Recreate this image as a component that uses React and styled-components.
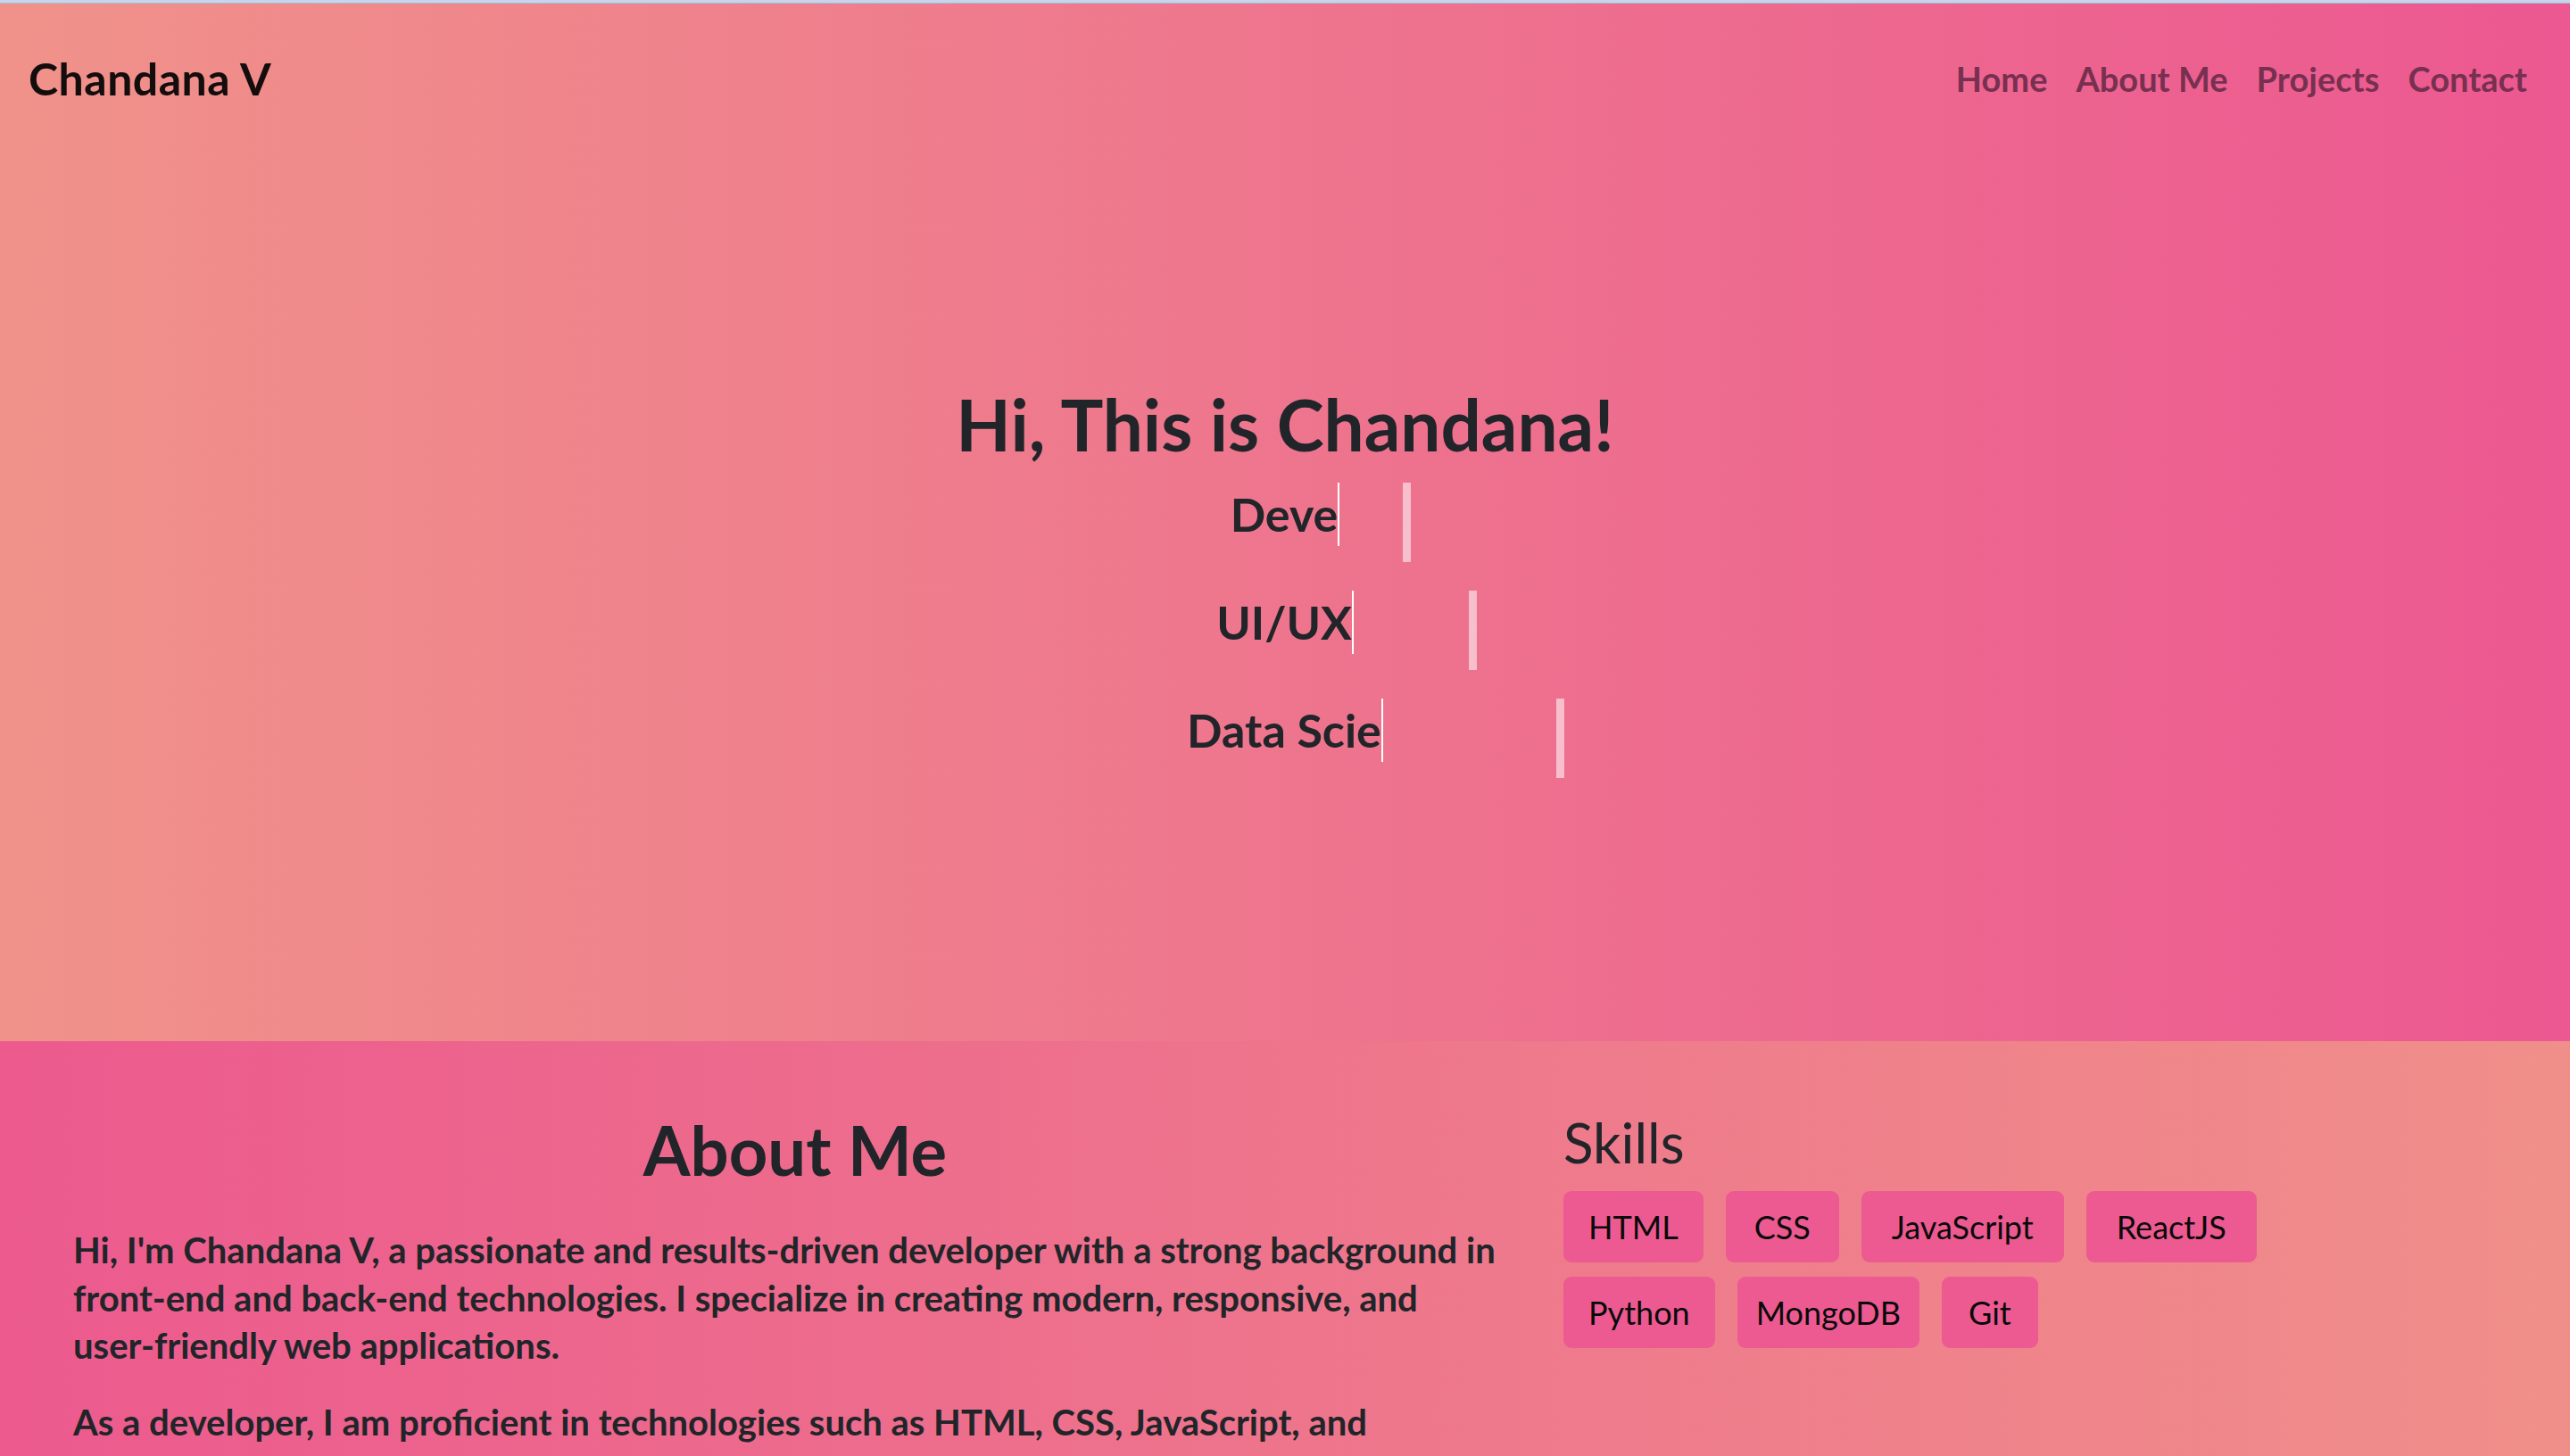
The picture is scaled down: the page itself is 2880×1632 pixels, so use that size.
import React from "react";
import styled, { createGlobalStyle } from "styled-components";

const GlobalStyle = createGlobalStyle`
  html, body { margin: 0; padding: 0; }
  body {
    font-family: "Lato", "Open Sans", sans-serif;
    color: #212529;
    background: #ec5a8e;
    overflow: hidden;
  }
  * { box-sizing: border-box; }
`;

const TopStrip = styled.div`
  height: 4px;
  background: #c5d5ec;
  border-bottom: 1px solid #aabad4;
`;

const Hero = styled.section`
  height: 1163px;
  background: linear-gradient(90deg, #f0928a 0%, #ec5891 100%);
  display: flex;
  flex-direction: column;
`;

const Header = styled.header`
  height: 168px;
  display: flex;
  align-items: center;
  justify-content: space-between;
  padding: 0 48px 0 32px;
`;

const Brand = styled.div`
  font-size: 50px;
  font-weight: 700;
  color: #140d0d;
  letter-spacing: 0.5px;
`;

const Nav = styled.nav`
  display: flex;
  gap: 32px;
`;

const NavLink = styled.a`
  font-size: 38px;
  font-weight: 700;
  color: #783050;
  text-decoration: none;
`;

const HeroBody = styled.div`
  display: flex;
  flex-direction: column;
  align-items: center;
  padding-top: 255px;
`;

const Title = styled.h1`
  margin: 0 0 18px;
  font-size: 80px;
  line-height: 1.2;
  font-weight: 700;
  color: #212529;
`;

const Line = styled.div`
  position: relative;
  height: 89px;
  margin-bottom: 32px;
`;

const Typed = styled.span`
  display: block;
  height: 71px;
  line-height: 71px;
  overflow: hidden;
  white-space: nowrap;
  border-right: 2px solid #ffffff;
  font-size: 52px;
  font-weight: 700;
  color: #212529;
`;

const Bar = styled.span`
  position: absolute;
  top: 0;
  left: calc(100% + ${(p) => p.$offset}px);
  width: 9px;
  height: 89px;
  background: rgba(255, 255, 255, 0.55);
`;

const About = styled.section`
  min-height: 469px;
  background: linear-gradient(90deg, #ec5a8e 0%, #f08f8a 100%);
  display: grid;
  grid-template-columns: 1618px 900px;
  column-gap: 52px;
  padding: 76px 0 0 82px;
`;

const AboutCol = styled.div`
  display: flex;
  flex-direction: column;
`;

const AboutTitle = styled.h1`
  margin: 0 0 41px;
  text-align: center;
  font-size: 76px;
  line-height: 1.2;
  font-weight: 700;
  color: #212529;
`;

const Para = styled.p`
  margin: 0 0 32px;
  font-size: 40px;
  line-height: 53.5px;
  font-weight: 700;
  color: #212529;
`;

const NoWrap = styled.span`
  white-space: nowrap;
`;

const SkillsCol = styled.div`
  display: flex;
  flex-direction: column;
`;

const SkillsTitle = styled.h3`
  margin: 0 0 18px;
  font-size: 62px;
  line-height: 1.2;
  font-weight: 400;
  color: #212529;
`;

const Badges = styled.div`
  display: flex;
  flex-wrap: wrap;
  gap: 16px 25px;
`;

const Badge = styled.span`
  display: inline-flex;
  align-items: center;
  height: 80px;
  padding: 0 ${(p) => p.$pad}px;
  background: #ec5a91;
  border-radius: 9px;
  font-size: 36px;
  color: #0a0a0a;
`;

const roles = [
  { text: "Deve", offset: 71 },
  { text: "UI/UX", offset: 129 },
  { text: "Data Scie", offset: 194 },
];

const skills = [
  { name: "HTML", pad: 28 },
  { name: "CSS", pad: 32 },
  { name: "JavaScript", pad: 34 },
  { name: "ReactJS", pad: 34 },
  { name: "Python", pad: 28 },
  { name: "MongoDB", pad: 21 },
  { name: "Git", pad: 30 },
];

export default function App() {
  return (
    <>
      <GlobalStyle />
      <TopStrip />
      <Hero>
        <Header>
          <Brand>Chandana V</Brand>
          <Nav>
            <NavLink href="#home">Home</NavLink>
            <NavLink href="#about">About Me</NavLink>
            <NavLink href="#projects">Projects</NavLink>
            <NavLink href="#contact">Contact</NavLink>
          </Nav>
        </Header>
        <HeroBody>
          <Title>Hi, This is Chandana!</Title>
          {roles.map((r) => (
            <Line key={r.text}>
              <Typed>{r.text}</Typed>
              <Bar $offset={r.offset} />
            </Line>
          ))}
        </HeroBody>
      </Hero>
      <About>
        <AboutCol>
          <AboutTitle>About Me</AboutTitle>
          <Para>
            Hi, I'm Chandana V, a passionate and results-driven developer with a strong background in{" "}
            <NoWrap>front-end</NoWrap> and <NoWrap>back-end</NoWrap> technologies. I specialize in creating
            modern, responsive, and <NoWrap>user-friendly</NoWrap> web applications.
          </Para>
          <Para>
            As a developer, I am proficient in technologies such as HTML, CSS, JavaScript, and
            frameworks like ReactJS, and I enjoy turning ideas into polished digital experiences.
          </Para>
        </AboutCol>
        <SkillsCol>
          <SkillsTitle>Skills</SkillsTitle>
          <Badges>
            {skills.map((s) => (
              <Badge key={s.name} $pad={s.pad}>
                {s.name}
              </Badge>
            ))}
          </Badges>
        </SkillsCol>
      </About>
    </>
  );
}
